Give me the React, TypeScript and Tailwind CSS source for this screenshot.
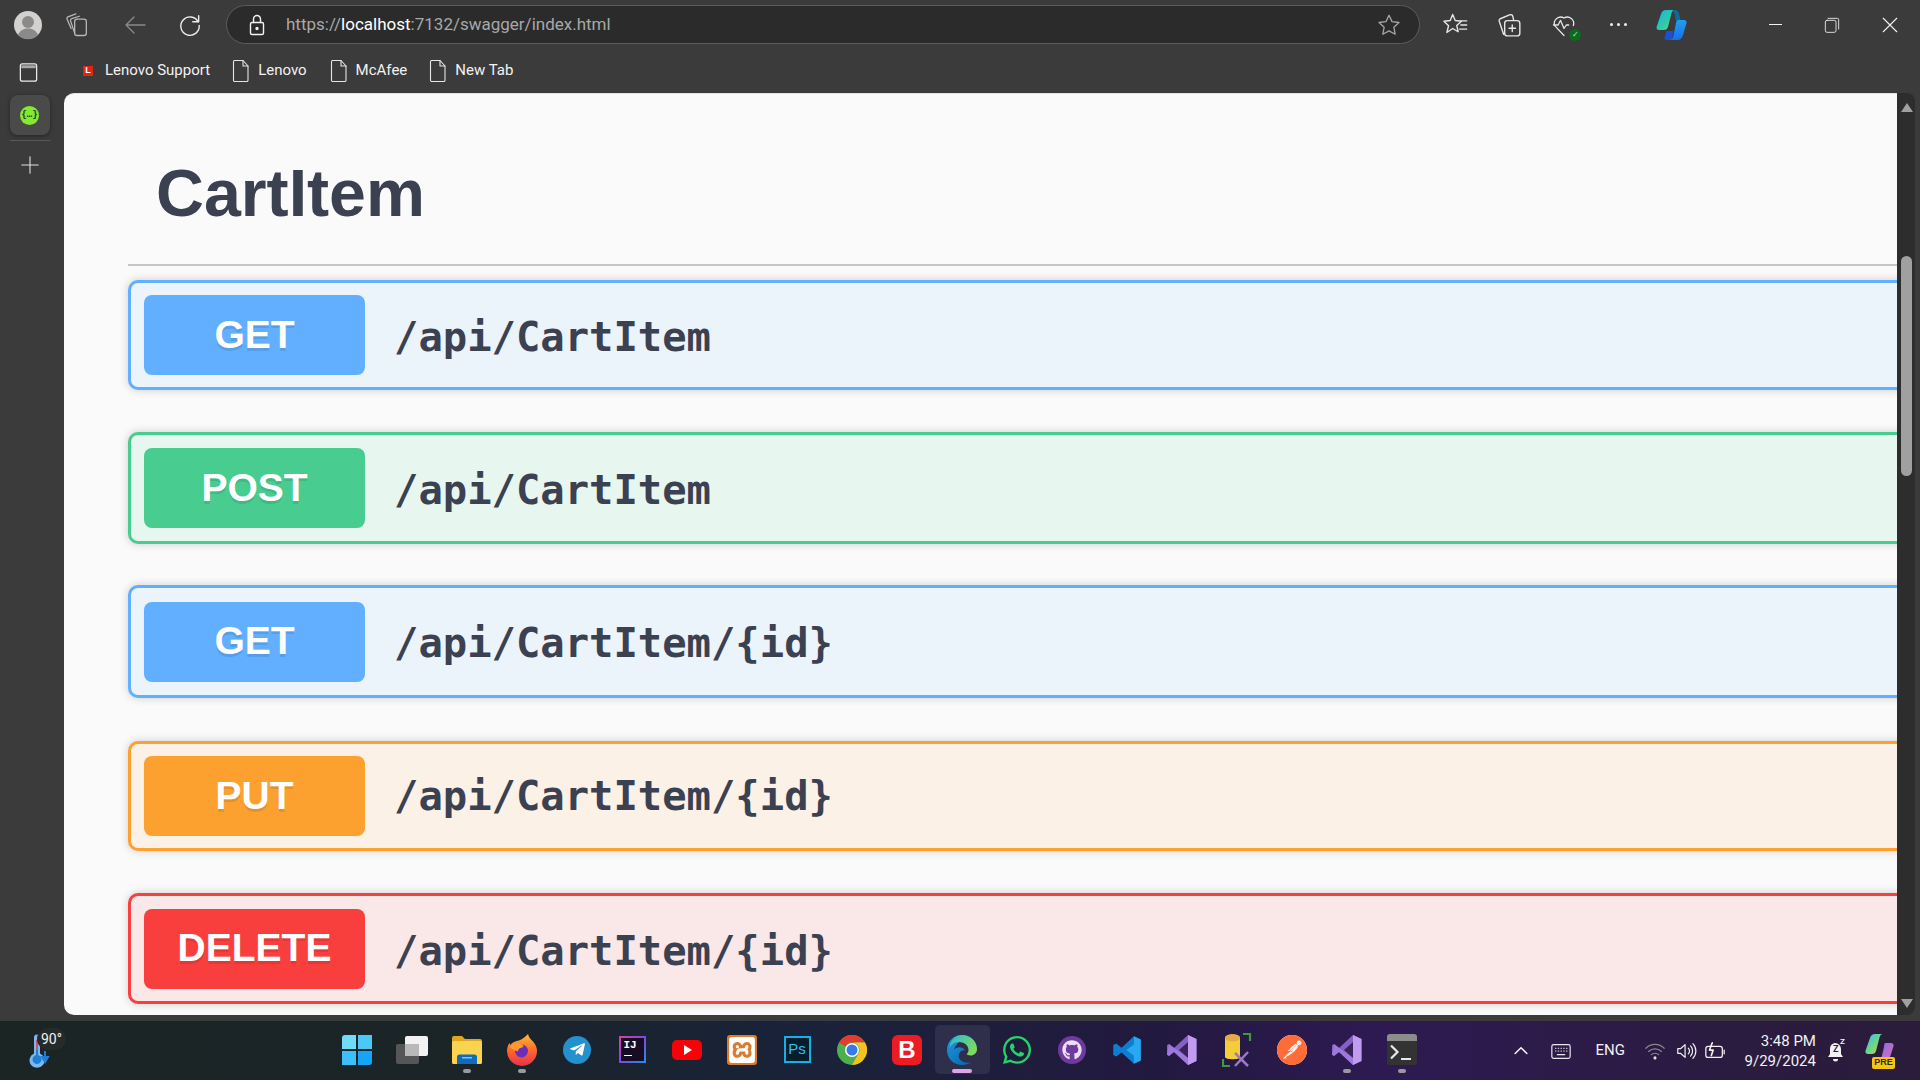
import type { ReactNode } from "react";
import { FaGithub, FaTelegramPlane, FaWhatsapp } from "react-icons/fa";
import { SiPostman, SiXampp } from "react-icons/si";

const routes = [
    { method: "GET", path: "/api/CartItem", row: "h-[110px] mb-[42px] border-[#61affe] bg-[#ebf3fb]", badge: "bg-[#61affe]", text: "pt-[4px]" },
    { method: "POST", path: "/api/CartItem", row: "h-[112px] mb-[41px] border-[#49cc90] bg-[#e8f6f0]", badge: "bg-[#49cc90]", text: "pt-[4px]" },
    { method: "GET", path: "/api/CartItem/{id}", row: "h-[113px] mb-[43px] border-[#61affe] bg-[#ebf3fb]", badge: "bg-[#61affe]", text: "pt-[4px]" },
    { method: "PUT", path: "/api/CartItem/{id}", row: "h-[110px] mb-[42px] border-[#fca130] bg-[#fbf1e6]", badge: "bg-[#fca130]", text: "pt-0" },
    { method: "DELETE", path: "/api/CartItem/{id}", row: "h-[111px] mb-[40px] border-[#f93e3e] bg-[#fae7e7]", badge: "bg-[#f93e3e]", text: "pt-[5px]" },
];

const Line = ({ size = 24, color = "#e6e6e6", width = 1.4, children }: { size?: number; color?: string; width?: number; children: ReactNode }) => (
    <svg width={size} height={size} viewBox="0 0 24 24" fill="none" stroke={color} strokeWidth={width} strokeLinecap="round" strokeLinejoin="round">
        {children}
    </svg>
);

const Slot = ({ className, children }: { className: string; children: ReactNode }) => (
    <div className={`flex shrink-0 items-center justify-center ${className}`}>{children}</div>
);

const Bookmark = ({ label, className }: { label: string; className: string }) => (
    <div className={`flex items-center ${className}`}>
        <Line size={24} width={1.1}>
            <path d="M5.500 1.500h8.500l5 5.500v14.300a1.200 1.200 0 0 1-1.200 1.200H5.700a1.200 1.200 0 0 1-1.200-1.200V2.700a1.200 1.200 0 0 1 1-1.200Z" />
            <path d="M14 1.500V7h5" />
        </Line>
        <span className="ml-[5px] text-[15px] text-[#f2f2f2]">{label}</span>
    </div>
);

const CopilotMark = ({ size = 32 }: { size?: number }) => (
    <svg width={size} height={size} viewBox="0 0 32 32">
        <defs>
            <linearGradient id="cpA" x1="0" y1="0" x2="1" y2="1">
                <stop offset="0" stopColor="#12b5e8" />
                <stop offset="0.55" stopColor="#2fc9a8" />
                <stop offset="1" stopColor="#6ad68a" />
            </linearGradient>
            <linearGradient id="cpB" x1="0" y1="0" x2="0" y2="1">
                <stop offset="0" stopColor="#1e9ff2" />
                <stop offset="1" stopColor="#1a6ee8" />
            </linearGradient>
        </defs>
        <path d="M10 1h9c-2 0-3 1.500-3.600 3.500L12 18c-.6 2-2 3-4 3H3c-2 0-2.800-1.500-2.300-3.300L5 5c.8-2.500 2.500-4 5-4Z" fill="url(#cpA)" />
        <path d="M16 31h-5c-1.500 0-2.500-.8-2.500-2l2-7h7l-1.500 9Z" fill="#1d4fd0" />
        <path d="M22 11h6c2 0 3 1.500 2.500 3.300L27 26c-.8 3-2.500 5-6 5h-8c2.500 0 3.600-1.500 4.300-3.600L20 14c.4-1.800 1-3 2-3Z" fill="url(#cpB)" />
        <path d="M19 1c2 0 3.500 1.500 4 3.500l1.500 6.500H22c-1 0-1.600.8-2 2L19 6c-.5-2-1.500-3.500-3-4 1-.7 2-1 3-1Z" fill="#0c6a9c" />
    </svg>
);

const VisualStudio = () => (
    <svg width="30" height="32" viewBox="0 0 30 32">
        <path d="M21 1 29.500 5v22L21 31 7 18l-5 4-2-1.200V11.200L2 10l5 4Z" fill="#8661c5" />
        <path d="M21 1 29.500 5v22L21 31Z" fill="#c19bf0" />
        <path d="M21 8 12 16l9 8Z" fill="#2a1a45" opacity="0.85" />
        <path d="M2 10 21 24v7L7 18l-5 4-2-1.200Z" fill="#a57ee0" opacity="0.8" />
    </svg>
);

const taskApps: ReactNode[] = [
    // start
    <div className="grid h-[30px] w-[30px] grid-cols-2 gap-[2px]">
        <div className="rounded-tl-[3px] bg-[#6fdcfb]" />
        <div className="bg-[#4cc8f8]" />
        <div className="bg-[#3cc0fa]" />
        <div className="rounded-br-[3px] bg-[#16a4f7]" />
    </div>,
    // task view
    <svg width="32" height="28" viewBox="0 0 32 28">
        <rect x="9" y="0" width="23" height="20" rx="2" fill="#f2f2f2" />
        <rect x="0" y="8" width="23" height="20" rx="2" fill="#5a5a5a" fillOpacity="0.95" />
        <rect x="9" y="8" width="14" height="12" fill="#b9b9b9" />
    </svg>,
    // file explorer
    <svg width="30" height="28" viewBox="0 0 30 28">
        <path d="M0 2a2 2 0 0 1 2-2h8l3 3h15a2 2 0 0 1 2 2v3H0Z" fill="#e0a51f" />
        <rect x="0" y="5" width="30" height="23" rx="1.500" fill="#fbd34f" />
        <path d="M5 21a2.500 2.500 0 0 1 2.500-2.500h15A2.500 2.500 0 0 1 25 21v7H5Z" fill="#0f6cbd" />
        <rect x="10" y="21" width="10" height="1.500" fill="#7cc4f5" />
    </svg>,
    // firefox
    <svg width="30" height="32" viewBox="0 0 30 32">
        <defs>
            <linearGradient id="ffA" x1="0" y1="0" x2="0" y2="1">
                <stop offset="0" stopColor="#ffbd2e" />
                <stop offset="0.5" stopColor="#ff6a2b" />
                <stop offset="1" stopColor="#e7304f" />
            </linearGradient>
        </defs>
        <path d="M21 0c.5 3 2.500 5 5 7.500 3 3.500 4 6.500 4 9.500a15 15 0 0 1-30 0c0-3 1-6 2.500-8l1 2c1-2 3-3 5-3.500 3-1 8-2 12.500-7.500Z" fill="url(#ffA)" />
        <circle cx="14.500" cy="17" r="6.500" fill="#6b2fb5" />
        <path d="M3 13c3-4 7-5 11-3 3 1.500 3 3 1 3.500-3 .5-4 2-4 4-3-1-6-2-8-4.500Z" fill="#ff9a2e" />
    </svg>,
    // telegram
    <div className="flex h-[28px] w-[28px] items-center justify-center rounded-full bg-[#2192cf]">
        <FaTelegramPlane className="h-[17px] w-[17px] text-white" />
    </div>,
    // intellij
    <div className="flex h-[27px] w-[27px] items-center justify-center bg-[linear-gradient(135deg,#e63d8f,#7b4be0_50%,#1f8fe8)]">
        <div className="flex h-[23px] w-[23px] flex-col bg-[#160d25] pl-[3px] pt-[1px] font-['Liberation_Mono',monospace] text-[11px] leading-[12px] font-bold text-white">
            IJ
            <div className="mt-[4px] h-[1px] w-[8px] bg-white" />
        </div>
    </div>,
    // youtube
    <div className="flex h-[20px] w-[30px] items-center justify-center rounded-[5px] bg-[#fb0007]">
        <div className="ml-[1px] h-0 w-0 border-y-[5px] border-l-[8px] border-y-transparent border-l-white" />
    </div>,
    // xampp
    <div className="flex h-[30px] w-[30px] items-center justify-center rounded-[3px] bg-[#dd7a2d]">
        <SiXampp className="h-[26px] w-[26px] text-white" />
    </div>,
    // photoshop
    <div className="flex h-[27px] w-[27px] items-center justify-center border-[2px] border-[#14b0e8] bg-[#061d2c] font-['Liberation_Sans',sans-serif] text-[15px] text-[#2ec0f2]">
        Ps
    </div>,
    // chrome
    <svg width="30" height="30" viewBox="0 0 30 30">
        <circle cx="15" cy="15" r="15" fill="#4caf50" />
        <path d="M15 0a15 15 0 0 1 13 7.500H15A7.500 7.500 0 0 0 8.500 11.300L2 7.500A15 15 0 0 1 15 0Z" fill="#e33b2e" />
        <path d="M28 7.500A15 15 0 0 1 15 30l6.500-11.250A7.500 7.500 0 0 0 15 7.500Z" fill="#f9c11c" />
        <circle cx="15" cy="15" r="7" fill="#fff" />
        <circle cx="15" cy="15" r="5.500" fill="#3b78e7" />
    </svg>,
    // bitdefender
    <div className="flex h-[30px] w-[30px] items-center justify-center rounded-[6px] bg-[#ed1c24] font-['Liberation_Sans',sans-serif] text-[24px] font-bold text-white">
        B
    </div>,
    // edge
    <svg width="30" height="30" viewBox="0 0 30 30">
        <defs>
            <linearGradient id="edA" x1="0" y1="0" x2="1" y2="1">
                <stop offset="0" stopColor="#1b9de2" />
                <stop offset="1" stopColor="#0c59a4" />
            </linearGradient>
            <linearGradient id="edB" x1="0" y1="0" x2="1" y2="0.6">
                <stop offset="0" stopColor="#2bb8d8" />
                <stop offset="1" stopColor="#7fdc5a" />
            </linearGradient>
        </defs>
        <path d="M15 0C7 0 0 6 0 15c0 8.500 6.500 15 15 15 4 0 7-1 9.500-3-3 1-7 1-10-1-2.500-1.800-3.500-5-2-8 1-2 3-3 5.500-2.800-3-4-8-3.500-11-.5C9 9 12 6 16 6c5 0 8 3 14 9C30 6 23.500 0 15 0Z" fill="url(#edA)" />
        <path d="M15 0c8.500 0 15 6.500 15 14 0 4-3 6.500-6.500 6.500-2 0-3.500-.8-4-1.500 1.500-1 2-2.500 2-4 0-4-3.500-8-9.500-8C7 7 4 10 2.500 13 3 6 8 0 15 0Z" fill="url(#edB)" />
    </svg>,
    // whatsapp
    <FaWhatsapp className="h-[32px] w-[32px] text-[#25d366]" />,
    // github
    <div className="flex h-[28px] w-[28px] items-center justify-center rounded-full bg-[#6e3a9e]">
        <FaGithub className="h-[20px] w-[20px] text-[#e8e0f0]" />
    </div>,
    // vscode
    <svg width="30" height="30" viewBox="0 0 24 24">
        <path d="M17.500 1 23 3.600v16.800L17.500 23 7.700 13.900 3.400 17.200 1 16V8l2.400-1.200 4.300 3.300Z" fill="#0e7fd0" />
        <path d="M17.500 1 23 3.600v16.800L17.500 23V16.500L11.500 12l6-4.500Z" fill="#27a8f0" />
    </svg>,
    <VisualStudio />,
    // db tool
    <svg width="30" height="34" viewBox="0 0 30 34">
        <path d="M3 5c0-5 15-5 15 0v19c0 3-15 3-15 0Z" fill="#f2cf3a" />
        <ellipse cx="10.500" cy="5" rx="7.500" ry="3.500" fill="#e8a94a" />
        <path d="M21 1h7v7M1 26v7h7" fill="none" stroke="#3f9a3f" strokeWidth="2.200" />
        <path d="M13 20 26 33M26 19l-13 14" stroke="#9b78c8" strokeWidth="2.500" fill="none" />
    </svg>,
    // postman
    <div className="flex h-[30px] w-[30px] items-center justify-center rounded-full bg-white">
        <SiPostman className="h-[30px] w-[30px] text-[#ff6c37]" />
    </div>,
    <VisualStudio />,
    // terminal
    <div className="relative h-[31px] w-[30px] overflow-hidden rounded-[3px] bg-[#333]">
        <div className="h-[7px] bg-[#8c8c8c]" />
        <svg className="absolute left-[3px] top-[10px]" width="24" height="18" viewBox="0 0 24 18" fill="none">
            <path d="M1 1.500 7.500 8 1 14.500" stroke="#e8e8e8" strokeWidth="2.200" />
            <path d="M11 15h10" stroke="#e8e8e8" strokeWidth="2.200" />
        </svg>
    </div>,
];

const runningDots: Record<number, string> = {
    2: "w-[8px] bg-[#9a9a9a]",
    3: "w-[8px] bg-[#9a9a9a]",
    11: "w-[20px] bg-[#e0a5e8]",
    18: "w-[8px] bg-[#9a9a9a]",
    19: "w-[8px] bg-[#9a9a9a]",
};

export default function App() {
    return (
        <div className="flex h-[1080px] w-[1920px] flex-col overflow-hidden bg-[#3b3b3b] font-['Roboto',sans-serif]">
            {/* toolbar */}
            <div className="flex h-[49px] shrink-0 items-center">
                <Slot className="ml-[12px] w-[32px]">
                    <svg width="30" height="30" viewBox="0 0 30 30">
                        <circle cx="15" cy="15" r="14" fill="#d3d1cf" />
                        <circle cx="15" cy="12" r="6" fill="#8c8a88" />
                        <path d="M5 25c2-5 6-6.500 10-6.500s8 1.500 10 6.500a14 14 0 0 1-20 0Z" fill="#8c8a88" />
                    </svg>
                </Slot>
                <Slot className="ml-[15px] w-[36px]">
                    <Line size={28} color="#b8b8b8" width={1.1}>
                        <rect x="10" y="7" width="10" height="14" rx="2" />
                        <path d="M10 19 6.500 8.500A1.500 1.500 0 0 1 7.500 6.500L14 4.500" />
                        <path d="M7 15 3.500 7A1.500 1.500 0 0 1 4.300 5L11 2.500" />
                    </Line>
                </Slot>
                <Slot className="ml-[22px] w-[36px]">
                    <Line size={24} color="#8a8a8a" width={1.3}>
                        <path d="M22 12H3M11 4l-8 8 8 8" />
                    </Line>
                </Slot>
                <Slot className="ml-[19px] w-[36px]">
                    <Line size={26} color="#ececec" width={1.3}>
                        <path d="M19.500 9A8.500 8.500 0 1 0 20.500 12.500" />
                        <path d="M20 3.500V9h-5.500" />
                    </Line>
                </Slot>
                <div className="ml-[18px] flex h-[39px] w-[1194px] items-center rounded-full border border-[#5c5c5c] bg-[#2b2b2b]">
                    <Slot className="ml-[16px] w-[28px]">
                        <Line size={24} color="#f2f2f2" width={1.4}>
                            <rect x="5.500" y="9.500" width="13" height="12" rx="1.500" />
                            <path d="M8.500 9.500V6a3.500 3.500 0 0 1 7 0v3.500" />
                            <circle cx="12" cy="15.500" r="1" fill="#f2f2f2" />
                        </Line>
                    </Slot>
                    <div className="ml-[15px] flex-1 text-[17px] text-[#a8a8a8]">
                        https://<span className="text-white">localhost</span>:7132/swagger/index.html
                    </div>
                    <Slot className="mr-[16px] w-[28px]">
                        <Line size={26} color="#a6a6a6" width={1.2}>
                            <path d="m12 3 2.800 5.900 6.400.8-4.700 4.400 1.200 6.400L12 17.400l-5.700 3.100 1.200-6.400L2.800 9.700l6.400-.8Z" />
                        </Line>
                    </Slot>
                </div>
                <Slot className="ml-[18px] w-[34px]">
                    <Line size={28} width={1.2}>
                        <path d="m10 3 2.200 5.200 5.300.6-4 3.600 1.200 5.400L10 15l-5 3.400 1.500-5.800-4-3.800 5.400-.6Z" />
                        <path d="M17 8.500h5M17 12h5M16 15.500h6" />
                    </Line>
                </Slot>
                <Slot className="ml-[20px] w-[34px]">
                    <Line size={26} width={1.3}>
                        <rect x="8" y="8" width="14" height="14" rx="2.500" />
                        <path d="M15 12v6M12 15h6" />
                        <path d="M7 20.500 3 8.500A2 2 0 0 1 4.500 6L13 2.500a2 2 0 0 1 2.500 1.500l.7 3" />
                    </Line>
                </Slot>
                <div className="relative ml-[21px] flex w-[34px] shrink-0 items-center justify-center">
                    <Line size={28} width={1.1}>
                        <path d="M12 21 4 12.500A5.500 5.500 0 0 1 12 6a5.500 5.500 0 0 1 8 6.500" />
                        <path d="M3 12h4l2-4 3 7 2-3h2" />
                    </Line>
                    <div className="absolute bottom-[-2px] right-[0px] flex h-[12px] w-[12px] items-center justify-center rounded-full bg-[#0d6b1d] text-[8px] leading-none text-[#b5e6bf]">
                        ✓
                    </div>
                </div>
                <div className="ml-[20px] flex w-[34px] shrink-0 justify-center gap-[4px]">
                    <div className="h-[3px] w-[3px] rounded-full bg-[#f0f0f0]" />
                    <div className="h-[3px] w-[3px] rounded-full bg-[#f0f0f0]" />
                    <div className="h-[3px] w-[3px] rounded-full bg-[#f0f0f0]" />
                </div>
                <Slot className="ml-[20px] w-[34px]">
                    <CopilotMark />
                </Slot>
                <Slot className="ml-[69px] w-[34px]">
                    <div className="h-[1px] w-[13px] bg-[#f2f2f2]" />
                </Slot>
                <Slot className="ml-[23px] w-[34px]">
                    <Line size={16} color="#f2f2f2" width={1.300}>
                        <rect x="2" y="5" width="16" height="18" rx="2.500" />
                        <path d="M6 2h14a2 2 0 0 1 2 2v14" />
                    </Line>
                </Slot>
                <Slot className="ml-[24px] w-[34px]">
                    <Line size={18} color="#f2f2f2" width={1.500}>
                        <path d="m3 3 18 18M21 3 3 21" />
                    </Line>
                </Slot>
            </div>

            {/* bookmarks */}
            <div className="flex h-[44px] shrink-0 items-center pb-[1px]">
                <Slot className="ml-[14px] mt-[3px] w-[29px]">
                    <Line size={23} color="#ececec" width={1.300}>
                        <rect x="3.500" y="3" width="17" height="18" rx="2" />
                        <path d="M4.500 6h15" strokeWidth={3} stroke="#a8a8a8" strokeLinecap="butt" />
                    </Line>
                </Slot>
                <div className="ml-[40px] flex h-[10px] w-[10px] items-center justify-center bg-[#e2231a] font-['Liberation_Sans',sans-serif] text-[9px] leading-none font-bold text-white">
                    L
                </div>
                <span className="ml-[12px] text-[15px] text-[#f2f2f2]">Lenovo Support</span>
                <Bookmark label="Lenovo" className="ml-[19px]" />
                <Bookmark label="McAfee" className="ml-[20px]" />
                <Bookmark label="New Tab" className="ml-[19px]" />
            </div>

            {/* browser body */}
            <div className="flex min-h-0 flex-1 pb-[6px] pr-[5px]">
                <div className="flex w-[64px] shrink-0 flex-col items-center pr-[5px] pt-[2px]">
                    <div className="flex h-[40px] w-[40px] items-center justify-center rounded-[8px] bg-[#4a4a4a] shadow-[0_1px_4px_rgba(0,0,0,0.4)]">
                        <div className="flex h-[19px] w-[19px] items-center justify-center rounded-full bg-[#85ea2d] font-['Liberation_Mono',monospace] text-[9px] leading-none font-bold text-[#173647]">
                            {"{…}"}
                        </div>
                    </div>
                    <div className="mt-[5px] h-[1px] w-[40px] bg-[#585858]" />
                    <div className="mt-[13px]">
                        <Line size={22} color="#e0e0e0" width={1.200}>
                            <path d="M12 3v18M3 12h18" />
                        </Line>
                    </div>
                </div>

                <div className="min-w-0 flex-1 overflow-hidden rounded-l-[10px] border-t border-[#e4e4e4] bg-[#fafafa]">
                    <div className="ml-[64px]">
                        <div className="flex h-[172px] items-center border-b-[2px] border-[#c4c5c9] pl-[28px] pt-[29px] font-['Liberation_Sans',sans-serif] text-[66.3px] font-bold text-[#3b4151]">
                            CartItem
                        </div>
                        <div className="-mr-[16px] pt-[14px]">
                            {routes.map((route, i) => (
                                <div
                                    key={i}
                                    className={`flex items-center rounded-[10px] border-[3px] pl-[13px] shadow-[0_0_8px_rgba(0,0,0,0.19)] ${route.row}`}
                                >
                                    <div
                                        className={`flex h-[80px] w-[221px] shrink-0 items-center justify-center rounded-[8px] font-['Liberation_Sans',sans-serif] text-[39px] font-bold text-white [text-shadow:0_3px_0_rgba(0,0,0,0.1)] ${route.badge}`}
                                    >
                                        {route.method}
                                    </div>
                                    <div className={`ml-[29px] font-['DejaVu_Sans_Mono',monospace] text-[40.5px] font-bold text-[#3b4151] ${route.text}`}>
                                        {route.path}
                                    </div>
                                </div>
                            ))}
                        </div>
                    </div>
                </div>

                {/* scrollbar */}
                <div className="flex w-[18px] shrink-0 flex-col items-center rounded-r-[8px] bg-[#2d2d2d] pl-[1px] pt-[10px]">
                    <div className="h-0 w-0 border-x-[6px] border-b-[9px] border-x-transparent border-b-[#a0a0a0]" />
                    <div className="mt-[144px] h-[220px] w-[11px] rounded-full bg-[#a0a0a0]" />
                    <div className="mt-auto mb-[7px] h-0 w-0 border-x-[6px] border-t-[9px] border-x-transparent border-t-[#a0a0a0]" />
                </div>
            </div>

            {/* taskbar */}
            <div className="flex h-[59px] shrink-0 items-center bg-[linear-gradient(90deg,#1b2524_0%,#1b2428_25%,#192338_40%,#22193f_60%,#2e1a52_72%,#2b1b42_88%,#2a1c3a_100%)]">
                <div className="relative ml-[26px] w-[303.5px] shrink-0">
                    <svg width="26" height="36" viewBox="0 0 26 36" fill="none">
                        <path d="M8 4.500a3 3 0 0 1 6 0v16a7.500 7.500 0 1 1-6 0Z" fill="#7cb8f0" />
                        <path d="M10 7h2v15a4.500 4.500 0 1 1-2 0Z" fill="#1f7fd8" />
                        <path d="M10 7h2v10h-2Z" fill="#d0506a" />
                        <path d="M19 18v9M16 24l3 5 3-5Z" stroke="#1f7fd8" strokeWidth="2" fill="#1f7fd8" />
                    </svg>
                    <span className="absolute left-[11px] top-[-5px] rounded-full bg-[#252b2b] px-[4px] text-[14px] leading-[22px] text-[#f2f2f2]">
                        90°
                    </span>
                </div>
                <div className="mb-[2px] flex shrink-0">
                    {taskApps.map((app, i) => (
                        <div
                            key={i}
                            className={`relative flex h-[49px] w-[55px] shrink-0 items-center justify-center rounded-[5px] ${i === 11 ? "bg-[#ffffff14]" : ""}`}
                        >
                            {app}
                            {runningDots[i] && (
                                <div className={`absolute bottom-[1px] left-1/2 h-[4px] -translate-x-1/2 rounded-full ${runningDots[i]}`} />
                            )}
                        </div>
                    ))}
                </div>
                <div className="flex flex-1 items-center text-[#f2f2f2]">
                    <Slot className="ml-[81px] w-[20px]">
                        <Line size={20} color="#f5f5f5" width={1.800}>
                            <path d="m5 15 7-7 7 7" />
                        </Line>
                    </Slot>
                    <Slot className="ml-[19px] w-[22px]">
                        <Line size={24} color="#e8e8e8" width={1.300}>
                            <rect x="2" y="5" width="20" height="15" rx="2" />
                            <path d="M6 9h.5M9 9h.5M12 9h.5M15 9h.5M18 9h.5M6 12h.5M9 12h.5M12 12h.5M15 12h.5M18 12h.5M8 16h8" />
                        </Line>
                    </Slot>
                    <span className="ml-[24px] text-[15px]">ENG</span>
                    <Slot className="ml-[19px] w-[22px]">
                        <Line size={22} color="#8a8a8a" width={1.300}>
                            <path d="M2 9a14 14 0 0 1 20 0M5 12.500a10 10 0 0 1 14 0M8 16a6 6 0 0 1 8 0" />
                            <circle cx="12" cy="19.500" r="1" fill="#e8e8e8" stroke="#e8e8e8" />
                        </Line>
                    </Slot>
                    <Slot className="ml-[9px] w-[22px]">
                        <Line size={22} color="#f0f0f0" width={1.300}>
                            <path d="M3 9.500v5h3l5 4.500V5L6 9.500Z" />
                            <path d="M14.500 9a4 4 0 0 1 0 6M17 6.500a8 8 0 0 1 0 11M19.500 4a11.500 11.500 0 0 1 0 16" />
                        </Line>
                    </Slot>
                    <Slot className="ml-[7px] w-[22px]">
                        <Line size={22} color="#f0f0f0" width={1.400}>
                            <rect x="2" y="7" width="18" height="12" rx="2.500" />
                            <path d="M22 11v4" />
                            <path d="M9 3 6 11h4l-2 6" strokeWidth={1.800} />
                        </Line>
                    </Slot>
                    <div className="ml-[7px] flex w-[83px] flex-col items-end text-[15px] leading-[20px]">
                        <span>3:48 PM</span>
                        <span>9/29/2024</span>
                    </div>
                    <div className="relative ml-[9px] flex w-[22px] shrink-0 justify-center">
                        <svg width="20" height="26" viewBox="0 0 20 26">
                            <path d="M9 5a6 6 0 0 1 6 6v5l2 3H2l2-3v-5a6 6 0 0 1 5-6Z" fill="#f2f2f2" />
                            <path d="M7 21h5a2.500 2.500 0 0 1-5 0Z" fill="#f2f2f2" />
                        </svg>
                        <span className="absolute left-[8px] top-[7px] text-[9px] leading-none font-bold text-[#2a1c3a]">Z</span>
                        <span className="absolute left-[15px] top-0 text-[8px] leading-none font-bold text-[#f2f2f2]">Z</span>
                    </div>
                    <div className="relative ml-[18px] h-[36px] w-[30px] shrink-0">
                        <svg width="30" height="30" viewBox="0 0 30 30">
                            <defs>
                                <linearGradient id="prA" x1="0" y1="0" x2="1" y2="1">
                                    <stop offset="0" stopColor="#3fb6f2" />
                                    <stop offset="0.5" stopColor="#6ad68a" />
                                    <stop offset="1" stopColor="#f0c846" />
                                </linearGradient>
                                <linearGradient id="prB" x1="0" y1="0" x2="1" y2="1">
                                    <stop offset="0" stopColor="#7a6cf0" />
                                    <stop offset="1" stopColor="#e86cb0" />
                                </linearGradient>
                            </defs>
                            <path d="M10 1h8c-2 0-3 1.500-3.500 3.500L11 18c-.5 2-2 3-4 3H3c-2 0-3-1.500-2.500-3.300L5 5c.8-2.500 2.500-4 5-4Z" fill="url(#prA)" />
                            <path d="M20 10h6c2 0 3 1.500 2.500 3.300L25 24c-.8 3-2.500 5-6 5h-7c2.500 0 3.600-1.500 4.300-3.600L19 14c.3-2 .5-4 1-4Z" fill="url(#prB)" />
                        </svg>
                        <div className="absolute bottom-0 left-[7px] flex h-[12px] w-[23px] items-center justify-center rounded-[2px] bg-[#f5c518] font-['Liberation_Sans',sans-serif] text-[9px] font-bold text-[#3a2a00]">
                            PRE
                        </div>
                    </div>
                </div>
            </div>
        </div>
    );
}
